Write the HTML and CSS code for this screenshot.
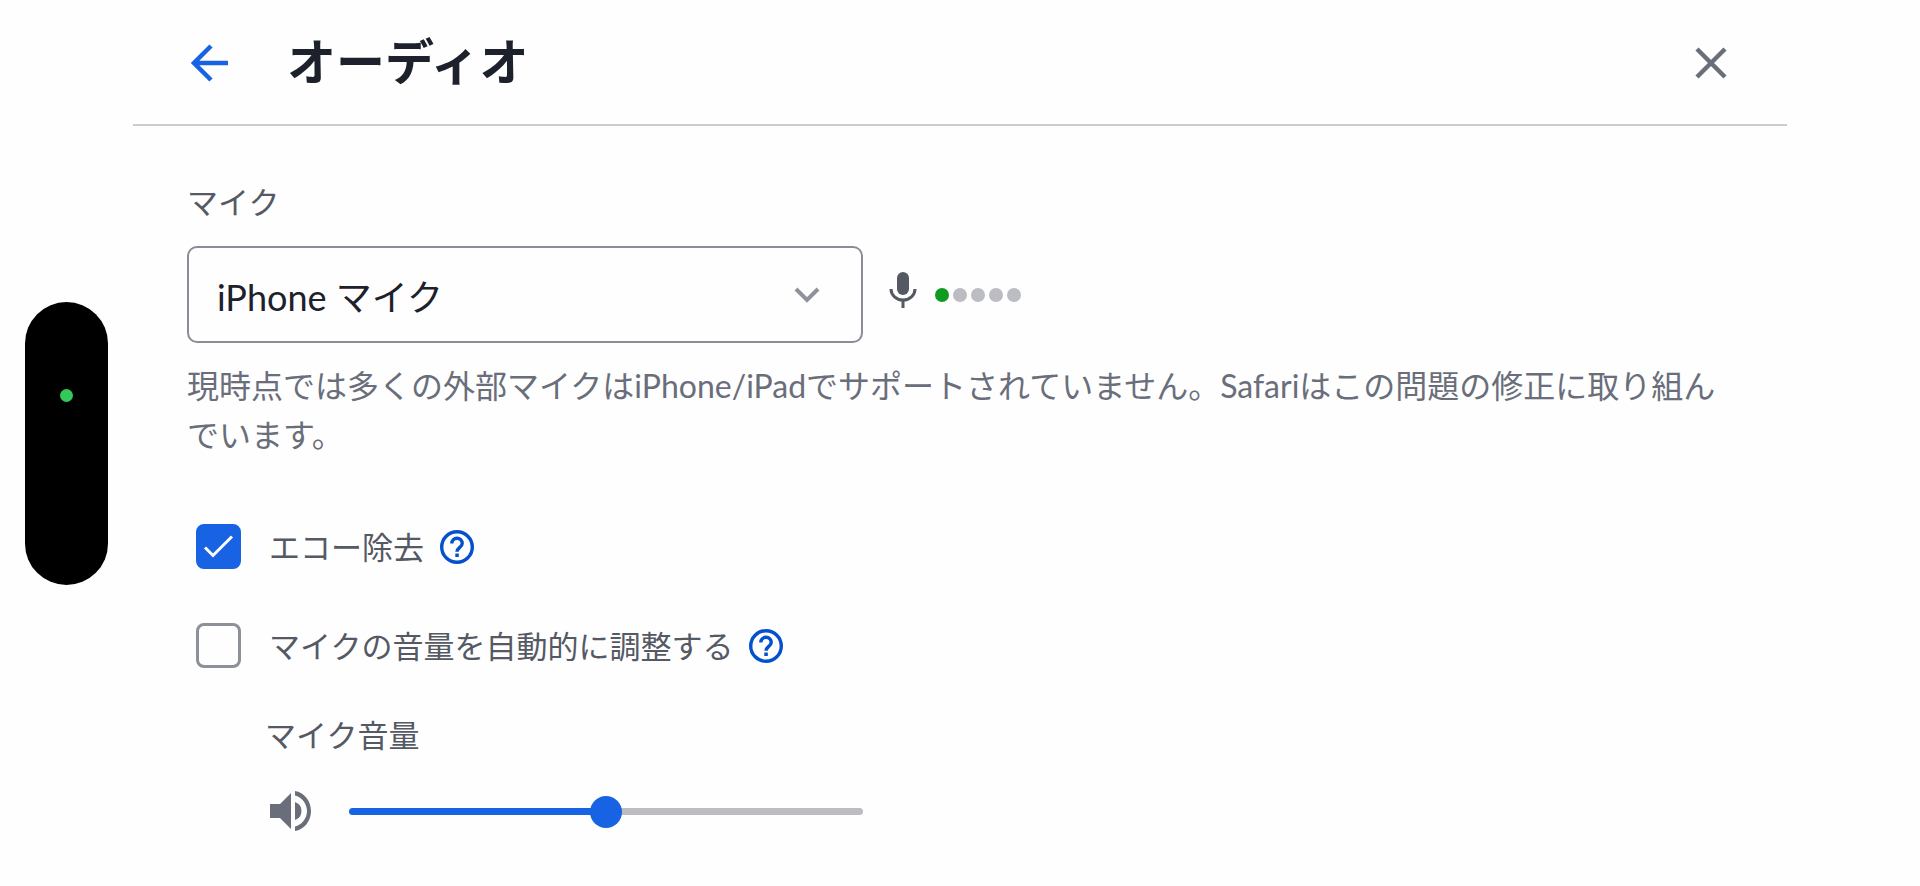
FILE: index.html
```html
<!DOCTYPE html>
<html lang="ja">
<head>
  <meta charset="utf-8">
  <title>オーディオ</title>
  <meta name="viewport" content="width=device-width, initial-scale=1">
  <link rel="stylesheet" href="styles.css">
</head>
<body>

<div class="device-edge">
  <div class="island"><span class="island-dot"></span></div>
</div>

<main class="panel">
  <header class="panel-header">
    <button class="icon-button" type="button" aria-label="戻る">
      <svg class="back-icon" width="38" height="38" viewBox="0 0 38 38"><path d="M37 19H4M20 2L3 19l17 17"/></svg>
    </button>
    <h1>オーディオ</h1>
    <button class="icon-button" type="button" aria-label="閉じる">
      <svg class="close-icon" width="32" height="32" viewBox="0 0 32 32"><path d="M2 2l28 28M30 2L2 30"/></svg>
    </button>
  </header>

  <form class="settings">
    <label class="field-label" for="mic">マイク</label>
    <div class="mic-row">
      <div class="select-box">
        <select id="mic">
          <option>iPhone マイク</option>
        </select>
        <svg class="chevron" width="26" height="16" viewBox="0 0 26 16"><path d="M2 2l11 11L24 2"/></svg>
      </div>
      <svg class="mic-icon" width="28" height="38" viewBox="0 0 28 38">
        <rect x="8" y="1" width="12" height="23" rx="6"/>
        <path d="M2 18a12 11 0 0 0 24 0M14 29v8"/>
      </svg>
      <div class="level">
        <span class="on"></span><span></span><span></span><span></span><span></span>
      </div>
    </div>
    <p class="hint">現時点では多くの外部マイクはiPhone/iPadでサポートされていません。Safariはこの問題の修正に取り組んでいます。</p>

    <div class="check-row">
      <span class="check-box">
        <input type="checkbox" id="echo" checked>
        <svg width="45" height="45" viewBox="0 0 45 45"><path d="M9 23.500l8 8L36 12.500"/></svg>
      </span>
      <label for="echo">エコー除去</label>
      <button class="icon-button" type="button" aria-label="エコー除去のヘルプ">
        <svg class="help-icon" width="34" height="34" viewBox="0 0 34 34">
          <circle cx="17" cy="17" r="15.300"/>
          <path d="M11.800 13.500a5.200 5.200 0 1 1 10.400 0c0 3.800-5.200 4-5.200 8.300"/>
          <rect x="15.300" y="23.500" width="3.500" height="3.500"/>
        </svg>
      </button>
    </div>

    <div class="check-row">
      <span class="check-box">
        <input type="checkbox" id="auto-gain">
        <svg width="45" height="45" viewBox="0 0 45 45"><path d="M9 23.500l8 8L36 12.500"/></svg>
      </span>
      <label for="auto-gain">マイクの音量を自動的に調整する</label>
      <button class="icon-button" type="button" aria-label="自動調整のヘルプ">
        <svg class="help-icon" width="34" height="34" viewBox="0 0 34 34">
          <circle cx="17" cy="17" r="15.300"/>
          <path d="M11.800 13.500a5.200 5.200 0 1 1 10.400 0c0 3.800-5.200 4-5.200 8.300"/>
          <rect x="15.300" y="23.500" width="3.500" height="3.500"/>
        </svg>
      </button>
    </div>

    <div class="volume">
      <label class="field-label" for="volume">マイク音量</label>
      <div class="volume-row">
        <svg class="speaker-icon" width="42" height="40" viewBox="0 0 42 40">
          <path d="M0 13h10L21 2v36L10 27H0z"/>
          <path d="M25 11a9.500 9.500 0 0 1 0 18z"/>
          <path d="M25 0c9 1 16 10 16 20s-7 19-16 20v-4.500c6.500-1.500 12-8 12-15.500S31.500 6 25 4.500z"/>
        </svg>
        <input type="range" id="volume" min="0" max="100" value="50" style="--fill: 50%">
      </div>
    </div>
  </form>
</main>

</body>
</html>
```

FILE: styles.css
```css
* { box-sizing: border-box; }

body {
  display: flex;
  min-height: 100vh;
  margin: 0;
  background: #fefefe;
  color: #555964;
  font: 31px/46px Lato, "Noto Sans CJK JP", sans-serif;
}

svg { display: block; fill: none; }

.device-edge {
  display: flex;
  align-items: center;
  flex: 0 0 133px;
  padding-left: 25px;
}

.island {
  width: 83px;
  height: 283px;
  padding-top: 87px;
  border-radius: 42px;
  background: #000;
}

.island-dot {
  display: block;
  width: 13px;
  height: 13px;
  margin: 0 auto;
  border-radius: 50%;
  background: #34c759;
}

.panel {
  flex: 1;
  min-width: 0;
  margin-right: 133px;
}

.panel-header {
  display: flex;
  align-items: center;
  gap: 58px;
  height: 126px;
  padding: 2px 60px 0 58px;
  border-bottom: 2px solid #ccc;
}

h1 {
  flex: 1;
  margin: 0;
  padding-bottom: 4px;
  color: #1c212b;
  font-size: 49px;
  line-height: 72px;
  font-weight: 700;
}

.icon-button {
  padding: 0;
  border: 0;
  background: none;
  cursor: pointer;
}

.back-icon { stroke: #1763e3; stroke-width: 4.5; }
.close-icon { stroke: #6a6e7b; stroke-width: 4.5; }

.settings { padding: 53px 70px 0 54px; }

.field-label { display: block; }

.mic-row {
  display: flex;
  align-items: center;
  margin-top: 21px;
}

.select-box {
  display: grid;
  align-items: center;
  flex: 0 1 676px;
}

.select-box > * { grid-area: 1 / 1; }

.select-box select {
  appearance: none;
  width: 100%;
  height: 97px;
  padding: 4px 80px 0 28px;
  border: 2px solid #898d96;
  border-radius: 10px;
  background: #fefefe;
  color: #1c212b;
  font: inherit;
  font-size: 36px;
}

.chevron {
  justify-self: end;
  margin-right: 43px;
  stroke: #8f929a;
  stroke-width: 4;
  pointer-events: none;
}

.mic-icon {
  margin: 0 18px 10px 26px;
  stroke: #555964;
  stroke-width: 3;
}

.mic-icon rect { fill: #555964; stroke: none; }

.level { display: flex; gap: 4px; }

.level span {
  width: 14px;
  height: 14px;
  border-radius: 50%;
  background: #bcbdc3;
}

.level .on { background: #109a20; }

.hint {
  margin: 18px 0 65px;
  color: #6a6e7b;
  font-size: 32px;
  line-height: 49px;
}

.check-row {
  display: flex;
  align-items: center;
  height: 45px;
  margin: 0 0 54px 9px;
}

.check-box {
  display: grid;
  margin-right: 28px;
}

.check-box > * { grid-area: 1 / 1; }

.check-box input {
  appearance: none;
  width: 45px;
  height: 45px;
  margin: 0;
  border: 3px solid #8c9098;
  border-radius: 8px;
}

.check-box input:checked {
  border-color: #1763e3;
  background: #1763e3;
}

.check-box svg {
  visibility: hidden;
  stroke: #fff;
  stroke-width: 3;
  pointer-events: none;
}

.check-box input:checked + svg { visibility: visible; }

.check-row .icon-button { margin-left: 16px; }

.help-icon { stroke: #0550cc; stroke-width: 3.4; }
.help-icon rect { fill: #0550cc; stroke: none; }

.volume {
  width: 598px;
  max-width: 100%;
  margin: -10px 0 0 78px;
}

.volume-row {
  display: flex;
  align-items: center;
  gap: 37px;
  margin: 33px 0 0 5px;
}

.speaker-icon { flex: none; fill: #6a6e7b; }

input[type="range"] {
  appearance: none;
  flex: 1;
  min-width: 0;
  height: 32px;
  margin: 0;
  background: none;
}

input[type="range"]::-webkit-slider-runnable-track {
  height: 7px;
  border-radius: 4px;
  background: linear-gradient(to right, #1763e3 var(--fill), #bcbdc1 var(--fill));
}

input[type="range"]::-webkit-slider-thumb {
  appearance: none;
  width: 32px;
  height: 32px;
  margin-top: -12px;
  border-radius: 50%;
  background: #1763e3;
}
```
